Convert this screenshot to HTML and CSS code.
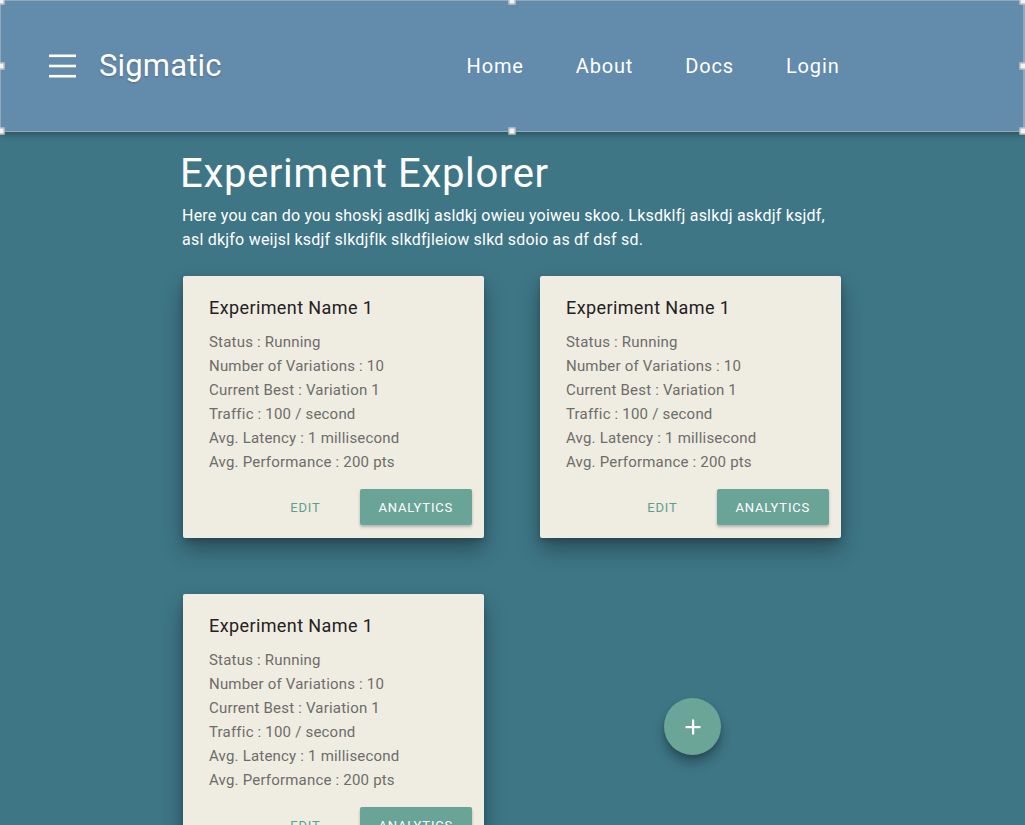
FILE: index.html
```html
<!DOCTYPE html>
<html lang="en">
<head>
<meta charset="utf-8">
<title>Sigmatic – Experiment Explorer</title>
<link rel="stylesheet" href="styles.css">
</head>
<body>
<header class="topbar">
  <div class="brand">
    <svg class="menu-icon" width="27" height="24" viewBox="0 0 27 24" aria-hidden="true">
      <rect x="0" y="0.5" width="27" height="2.6" fill="#fff"/>
      <rect x="0" y="10.7" width="27" height="2.6" fill="#fff"/>
      <rect x="0" y="20.9" width="27" height="2.6" fill="#fff"/>
    </svg>
    <span class="logo">Sigmatic</span>
  </div>
  <nav class="nav">
    <a class="nav-link" href="#">Home</a>
    <a class="nav-link" href="#">About</a>
    <a class="nav-link" href="#">Docs</a>
    <a class="nav-link" href="#">Login</a>
  </nav>
  <span class="handle h-tl"></span>
  <span class="handle h-tm"></span>
  <span class="handle h-tr"></span>
  <span class="handle h-ml"></span>
  <span class="handle h-mr"></span>
  <span class="handle h-bl"></span>
  <span class="handle h-bm"></span>
  <span class="handle h-br"></span>
</header>

<main class="content">
  <h1 class="page-title">Experiment Explorer</h1>
  <p class="intro">Here you can do you shoskj asdlkj asldkj owieu yoiweu skoo. Lksdklfj aslkdj askdjf ksjdf, asl dkjfo weijsl ksdjf slkdjflk slkdfjleiow slkd sdoio as df dsf sd.</p>

  <section class="cards">
    <article class="card">
      <h2 class="card-title">Experiment Name 1</h2>
      <ul class="card-stats">
        <li>Status : Running</li>
        <li>Number of Variations : 10</li>
        <li>Current Best : Variation 1</li>
        <li>Traffic : 100 / second</li>
        <li>Avg. Latency : 1 millisecond</li>
        <li>Avg. Performance : 200 pts</li>
      </ul>
      <div class="card-actions">
        <button class="btn btn-flat">Edit</button>
        <button class="btn btn-raised">Analytics</button>
      </div>
    </article>

    <article class="card">
      <h2 class="card-title">Experiment Name 1</h2>
      <ul class="card-stats">
        <li>Status : Running</li>
        <li>Number of Variations : 10</li>
        <li>Current Best : Variation 1</li>
        <li>Traffic : 100 / second</li>
        <li>Avg. Latency : 1 millisecond</li>
        <li>Avg. Performance : 200 pts</li>
      </ul>
      <div class="card-actions">
        <button class="btn btn-flat">Edit</button>
        <button class="btn btn-raised">Analytics</button>
      </div>
    </article>

    <article class="card">
      <h2 class="card-title">Experiment Name 1</h2>
      <ul class="card-stats">
        <li>Status : Running</li>
        <li>Number of Variations : 10</li>
        <li>Current Best : Variation 1</li>
        <li>Traffic : 100 / second</li>
        <li>Avg. Latency : 1 millisecond</li>
        <li>Avg. Performance : 200 pts</li>
      </ul>
      <div class="card-actions">
        <button class="btn btn-flat">Edit</button>
        <button class="btn btn-raised">Analytics</button>
      </div>
    </article>
  </section>
</main>

<button class="fab" aria-label="Add experiment">
  <svg width="16" height="16" viewBox="0 0 16 16" aria-hidden="true">
    <rect x="7" y="0.5" width="2.2" height="15" fill="#fff"/>
    <rect x="0.5" y="7" width="15" height="2.2" fill="#fff"/>
  </svg>
</button>
</body>
</html>
```

FILE: styles.css
```css
* {
  box-sizing: border-box;
}

html, body {
  margin: 0;
  padding: 0;
}

body {
  background: #3e7686;
  font-family: Roboto, "Liberation Sans", Arial, sans-serif;
  color: #fff;
  min-height: 825px;
}

/* ---------- Top bar ---------- */
.topbar {
  position: relative;
  height: 132px;
  background: #638bab;
  border: 1px solid #8fa9be;
  border-right-width: 2px;
  box-shadow: 0 2px 7px rgba(0, 0, 0, 0.35);
  display: flex;
  align-items: center;
  padding-left: 48px;
  z-index: 2;
}

.brand {
  display: flex;
  align-items: center;
  gap: 23px;
}

.menu-icon {
  display: block;
}

.logo {
  font-size: 31px;
  line-height: 1;
  font-weight: 400;
  letter-spacing: 0.15px;
  color: #fff;
  text-shadow: 0 1px 2px rgba(0, 0, 0, 0.22);
  position: relative;
  top: -1px;
}

.nav {
  display: flex;
  align-items: center;
  gap: 52px;
  margin-left: 245px;
}

.nav-link {
  color: #fff;
  text-decoration: none;
  font-size: 20px;
  letter-spacing: 0.85px;
  line-height: 1;
}

.handle {
  position: absolute;
  width: 7px;
  height: 7px;
  background: #f4f4f4;
  border: 1px solid #a9a9a9;
  transform: translate(-50%, -50%);
}
.h-tl { left: 0; top: 0; }
.h-tm { left: 50%; top: 0; }
.h-tr { left: 100%; top: 0; }
.h-ml { left: 0; top: 50%; }
.h-mr { left: 100%; top: 50%; }
.h-bl { left: 0; top: 100%; }
.h-bm { left: 50%; top: 100%; }
.h-br { left: 100%; top: 100%; }

/* ---------- Content ---------- */
.content {
  width: 665px;
  margin: 0 auto;
  padding-top: 18px;
}

.page-title {
  margin: 0 0 6px;
  font-size: 40px;
  line-height: 48px;
  font-weight: 400;
  letter-spacing: 0.65px;
  color: #fff;
}

.intro {
  margin: 0 0 24px;
  padding-left: 2px;
  font-size: 16px;
  line-height: 24px;
  letter-spacing: 0.22px;
  color: #fff;
}

.cards {
  display: grid;
  grid-template-columns: 301px 301px;
  column-gap: 56px;
  row-gap: 56px;
  padding-left: 3px;
}

.card {
  background: #efece2;
  border-radius: 2px;
  padding: 18px 12px 13px 26px;
  box-shadow: 0 12px 22px rgba(0, 0, 0, 0.32), 0 3px 6px rgba(0, 0, 0, 0.18);
}

.card-title {
  margin: 0 0 8px;
  font-size: 18px;
  line-height: 28px;
  font-weight: 400;
  letter-spacing: 0.4px;
  color: #222;
}

.card-stats {
  list-style: none;
  margin: 0;
  padding: 0;
}

.card-stats li {
  font-size: 15px;
  line-height: 24px;
  letter-spacing: 0.2px;
  color: #6d6d6a;
}

.card-actions {
  display: flex;
  justify-content: flex-end;
  align-items: center;
  gap: 20px;
  margin-top: 15px;
}

.btn {
  font-family: Roboto, "Liberation Sans", Arial, sans-serif;
  font-size: 13px;
  letter-spacing: 0.8px;
  text-transform: uppercase;
  height: 36px;
  padding: 0 19px;
  border: none;
  border-radius: 2px;
  cursor: pointer;
}

.btn-flat {
  background: transparent;
  color: #5c9f92;
}

.btn-raised {
  background: #69a497;
  color: #fff;
  box-shadow: 0 2px 3px rgba(0, 0, 0, 0.25);
}

/* ---------- Floating action button ---------- */
.fab {
  position: fixed;
  left: 664px;
  top: 698px;
  width: 57px;
  height: 57px;
  border-radius: 50%;
  border: none;
  background: #6ba598;
  box-shadow: 0 8px 12px rgba(0, 0, 0, 0.3), 0 2px 4px rgba(0, 0, 0, 0.15);
  display: flex;
  align-items: center;
  justify-content: center;
  padding: 0;
  cursor: pointer;
}
```
